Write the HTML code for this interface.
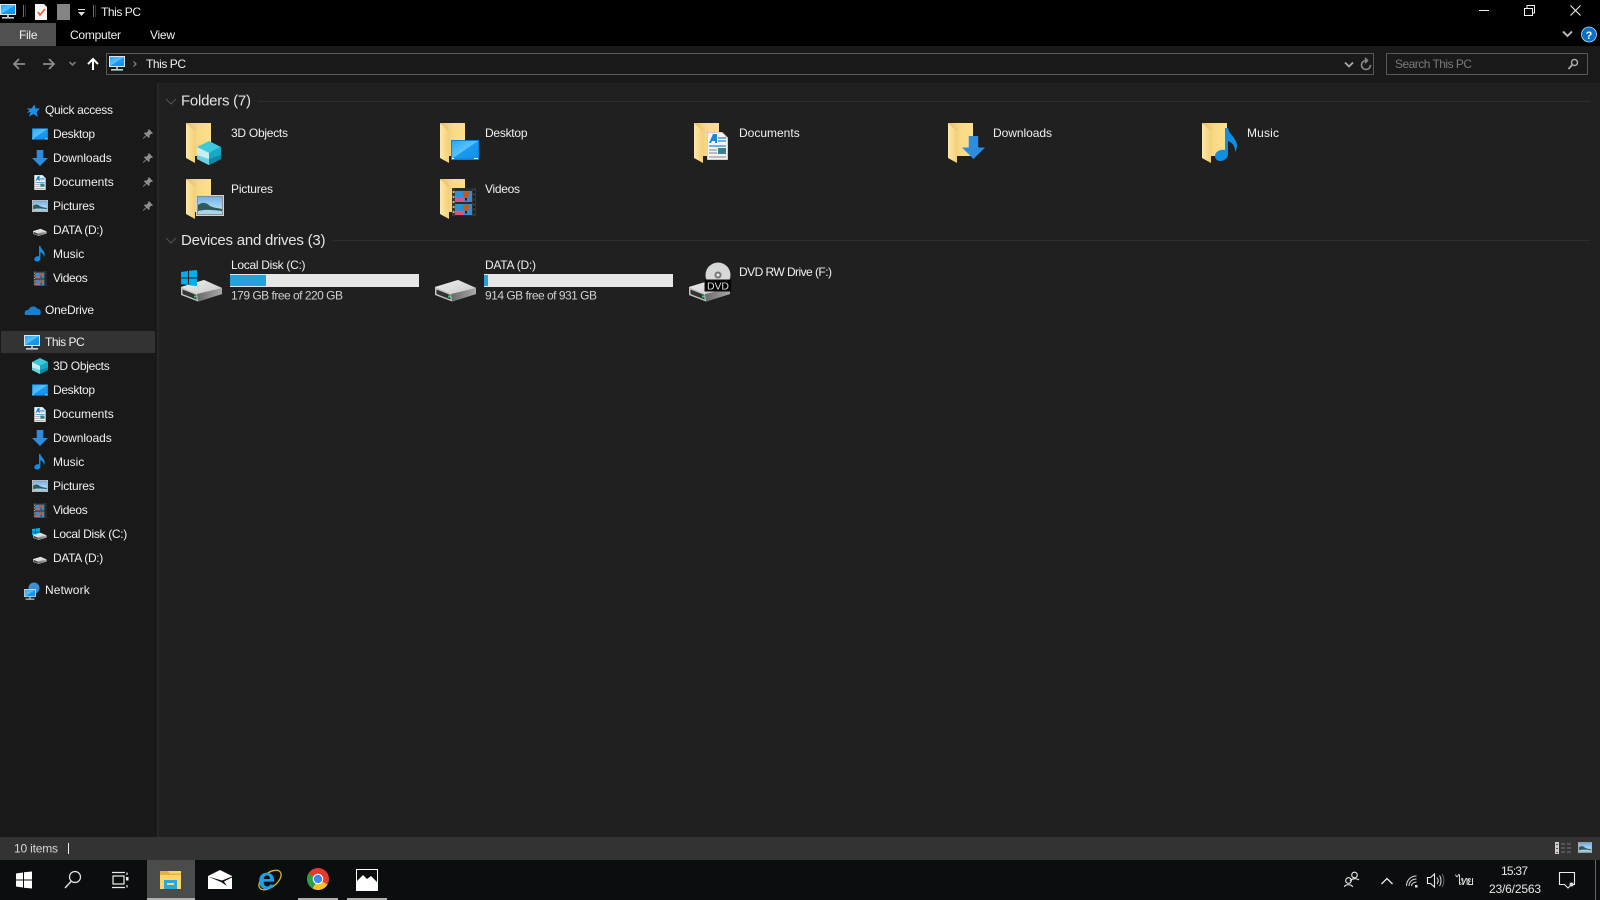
<!DOCTYPE html>
<html><head><meta charset="utf-8"><title>This PC</title>
<style>
html,body{margin:0;padding:0;background:#202020;width:1600px;height:900px;overflow:hidden}
svg{display:block;position:absolute;left:0;top:0}
text{font-family:"Liberation Sans","Noto Sans CJK SC",sans-serif;font-size:12px;fill:#f0f0f0}
.h{font-size:15px;fill:#e4e4e4}
.d{fill:#d0d0d0}
</style></head><body>
<svg width="1600" height="900" viewBox="0 0 1600 900" xmlns="http://www.w3.org/2000/svg">
<defs>
<linearGradient id="fl" x1="0" x2="1" y1="0" y2="0"><stop offset="0" stop-color="#fde9a8"/><stop offset="1" stop-color="#f2cf7a"/></linearGradient>
<linearGradient id="bk" x1="0" x2="1" y1="0" y2="0"><stop offset="0" stop-color="#e9c168"/><stop offset=".5" stop-color="#f9d985"/><stop offset="1" stop-color="#fde08e"/></linearGradient>
<linearGradient id="sky" x1="0" x2="0" y1="0" y2="1"><stop offset="0" stop-color="#6fb4ea"/><stop offset="1" stop-color="#d6ebf8"/></linearGradient>
<linearGradient id="top" x1="0" x2="1" y1="0" y2="1"><stop offset="0" stop-color="#f0f0f0"/><stop offset="1" stop-color="#c8c8c8"/></linearGradient>
<linearGradient id="rt" x1="0" x2="1" y1="0" y2="0"><stop offset="0" stop-color="#6a6a6a"/><stop offset="1" stop-color="#a8a8a8"/></linearGradient>
<linearGradient id="mon" x1="0" x2="1" y1="0" y2="1"><stop offset="0" stop-color="#2aa8f5"/><stop offset=".5" stop-color="#5cc2fa"/><stop offset=".5" stop-color="#1a9cf0"/><stop offset="1" stop-color="#0f8fe8"/></linearGradient>
<symbol id="folder" viewBox="0 0 25 40" overflow="visible"><path d="M0 0H25V33H9V7Z" fill="url(#bk)"/><path d="M0 0L9 7V40L0 35Z" fill="url(#fl)"/></symbol>
<symbol id="cube" viewBox="0 0 24 24"><path d="M12 0L24 6L12 12L0 6Z" fill="#3cc9dc"/><path d="M0 6L12 12V24L0 18Z" fill="#c6eff4"/><path d="M0 14L12 18V24L0 18Z" fill="#6bd3e0"/><path d="M12 12L24 6V18L12 24Z" fill="#15a9c8"/><path d="M12 18L24 14V18L12 24Z" fill="#0d8aa8"/></symbol>
<symbol id="desk" viewBox="0 0 28 20"><rect width="28" height="20" fill="#0a80d8"/><rect x="1" y="1" width="26" height="17.5" fill="url(#mon)"/><rect x="1" y="18" width="2" height="1" fill="#fff"/><rect x="23" y="18" width="4" height="1" fill="#fff"/></symbol>
<symbol id="doc" viewBox="0 0 21 28"><path d="M0 0H15L21 6V28H0Z" fill="#f4f4f4" stroke="#9a9a9a" stroke-width=".8"/><path d="M6 2L2 11H4L5 9H8V11H10V2Z" fill="#1e88d8"/><path d="M11 6H19M11 9H19" stroke="#1e88d8" stroke-width="1.3"/><path d="M2 14H19" stroke="#1e88d8" stroke-width="1.3"/><path d="M2 18H10M2 21H10M2 25H19" stroke="#999" stroke-width="1.3"/><rect x="11" y="16" width="8" height="6" fill="#3a7f8e"/></symbol>
<symbol id="arrow" viewBox="0 0 16 16"><path d="M4.700 0H11.300V8H16L8 16L0 8H4.700Z" fill="#2c8ce0"/></symbol>
<symbol id="note" viewBox="0 0 22 34"><path d="M10 0H13C13.500 6 22 10 22 18C22 20 21 22.500 20 24C20.500 19 18 15 13 13V26C13 30 9 33 5.500 33C2 33 0 31 0 28C0 24 5 21 10 22Z" fill="#0e8fe6"/></symbol>
<symbol id="pic" viewBox="0 0 28 21"><rect width="28" height="21" fill="#d4d4d4"/><rect x="1" y="1" width="26" height="19" fill="#8e8e8e"/><rect x="2" y="2" width="24" height="17" fill="url(#sky)"/><path d="M2 10C6 7 10 7 14 11C18 13 22 13 26 14V19H2Z" fill="#2f5a57"/><path d="M2 16C10 14 18 15 26 16V19H2Z" fill="#a9d3e8"/></symbol>
<symbol id="film" viewBox="0 0 24 28"><rect width="24" height="28" fill="#2b2b2b"/><rect x="0" y="0" width="3" height="28" fill="#3a3a30"/><rect x="20" y="0" width="4" height="28" fill="#353535"/><g fill="#c9b98e"><rect x=".7" y="3" width="1.800" height="2"/><rect x=".7" y="8" width="1.800" height="2"/><rect x=".7" y="13" width="1.800" height="2"/><rect x=".7" y="18" width="1.800" height="2"/><rect x=".7" y="23" width="1.800" height="2"/></g><g fill="#171717"><rect x="21" y="3" width="2" height="2"/><rect x="21" y="8" width="2" height="2"/><rect x="21" y="13" width="2" height="2"/><rect x="21" y="18" width="2" height="2"/><rect x="21" y="23" width="2" height="2"/></g><rect x="3" y="3" width="17" height="11" fill="#2f8fd8"/><rect x="3" y="16" width="17" height="11" fill="#2f8fd8"/><rect x="3" y="10" width="9" height="4" fill="#cf5a7c"/><rect x="3" y="23" width="9" height="4" fill="#cf5a7c"/><circle cx="14" cy="6.500" r="3.300" fill="#c8561e"/><circle cx="14" cy="19.500" r="3.300" fill="#c8561e"/><rect x="13" y="10" width="2" height="2.500" fill="#222"/><rect x="13" y="23" width="2" height="2.500" fill="#222"/></symbol>
<symbol id="drive" viewBox="0 0 42 22"><path d="M0 7L23 0L41 8V14L17 21.500L0 15Z" fill="#c4c4c4"/><path d="M0 7L23 0L41 8L16 14Z" fill="url(#top)"/><path d="M16 14L41 8V14L17 21.500Z" fill="url(#rt)"/><path d="M1.500 9.500L15.500 15V19.500L1.500 14Z" fill="#333"/><rect x="13" y="15.500" width="2.500" height="2" fill="#2ed060"/></symbol>
<symbol id="win" viewBox="0 0 16 16"><path d="M0 2L7 1V7.5H0ZM8 .8L16 0V7.5H8ZM0 8.5H7V15L0 14ZM8 8.5H16V16L8 15.2Z" fill="#00aeef"/></symbol>
<symbol id="pc" viewBox="0 0 16 15"><rect x="0" y="0" width="16" height="11" fill="#d8e6f0"/><rect x="1" y="1" width="14" height="9" fill="url(#mon)"/><rect x="7" y="11" width="2" height="2" fill="#9fb0bb"/><rect x="2" y="13" width="12" height="1.6" fill="#c8d0d6"/></symbol>
<symbol id="pin" viewBox="0 0 10 10"><path d="M5.800 0L10 4.200L9 5L8.200 4.600L6.400 6.400L6.600 8.200L5.600 9L3.600 6.800L.8 9.600L0 9.600V9L3 6.200L1 4.400L1.800 3.400L3.600 3.600L5.400 1.800L5 1Z" fill="#8f8f8f"/></symbol>
</defs>

<!-- title bar and ribbon -->
<rect width="1600" height="46" fill="#000"/>
<rect x="0" y="23" width="56" height="23" fill="#505050"/>
<use href="#pc" x="0" y="4" width="16" height="15"/>
<rect x="23" y="5" width="1" height="12" fill="#707070"/><rect x="25" y="5" width="1" height="12" fill="#333"/>
<path d="M35 4H44L47 7V20H35Z" fill="#f4f4f4"/><path d="M38 12L40 15L45 9" fill="none" stroke="#e8602c" stroke-width="1.600"/>
<path d="M57 4H70V20H57Z" fill="#858585"/>
<rect x="78" y="9" width="7" height="1" fill="#ddd"/><path d="M78 12H85L81.500 16Z" fill="#ddd"/>
<rect x="93" y="5" width="1" height="12" fill="#707070"/><rect x="95" y="5" width="1" height="12" fill="#333"/>
<text x="101" y="16" textLength="40">This PC</text>
<text x="19" y="39" textLength="18.500">File</text>
<text x="70" y="39" textLength="51">Computer</text>
<text x="150" y="39" textLength="25">View</text>
<path d="M1479 10.500H1489" stroke="#f0f0f0" stroke-width="1"/>
<path d="M1524.500 8.500H1532.500V15.500H1524.500ZM1527 8V5.500H1534.500V13H1533" fill="none" stroke="#f0f0f0" stroke-width="1"/>
<path d="M1570.500 5.500L1580.500 15.500M1580.500 5.500L1570.500 15.500" stroke="#f0f0f0" stroke-width="1.100"/>
<path d="M1563 31.500L1567.500 36L1572 31.500" fill="none" stroke="#b4b4b4" stroke-width="2"/>
<circle cx="1589" cy="34.500" r="7.500" fill="#0b6fc9" stroke="#bcd9ef" stroke-width=".8"/>
<text x="1585.600" y="39" style="font-size:11px;font-weight:bold;fill:#fff">?</text>

<!-- nav -->
<rect x="0" y="46" width="1600" height="37" fill="#191919"/>
<rect x="0" y="83" width="157" height="754" fill="#191919"/>
<rect x="157" y="83" width="2" height="754" fill="#272727"/>
<rect x="159" y="83" width="1441" height="754" fill="#202020"/>
<path d="M25 64H14.500M19 59L14 64L19 69" fill="none" stroke="#8c8c8c" stroke-width="1.800"/>
<path d="M43 64H54M49 59L54 64L49 69" fill="none" stroke="#8c8c8c" stroke-width="1.800"/>
<path d="M69.500 62L72.500 65L75.500 62" fill="none" stroke="#7a7a7a" stroke-width="1.600"/>
<path d="M93 70V59M88 64L93 59L98 64" fill="none" stroke="#fff" stroke-width="2"/>
<rect x="106.500" y="53.500" width="1267" height="21" fill="none" stroke="#575757"/>
<use href="#pc" x="109" y="56" width="16" height="15"/>
<path d="M133.500 61.500L136 64L133.500 66.500" fill="none" stroke="#8a8a8a" stroke-width="1.200"/>
<text x="146" y="68" textLength="40">This PC</text>
<path d="M1345 62.500L1349 66.500L1353 62.500" fill="none" stroke="#aaa" stroke-width="1.800"/>
<path d="M1370.500 65A4.500 4.500 0 1 1 1366 60.500M1365 58L1367.500 60.500L1365 63" fill="none" stroke="#8a8a8a" stroke-width="1.600"/>
<rect x="1386.500" y="53.500" width="201" height="21" fill="none" stroke="#575757"/>
<text x="1395" y="68" textLength="77" style="fill:#7a7a7a">Search This PC</text>
<circle cx="1574.500" cy="62.500" r="3" fill="none" stroke="#aaa" stroke-width="1.500"/><path d="M1572 65L1568.500 69" stroke="#aaa" stroke-width="1.800"/>

<!-- sidebar -->
<rect x="1" y="331" width="154" height="22" fill="#333"/>
<path d="M34.500 104.500L35.500 108.500H40L36.500 112L38 117L33.500 114L29 116.500L30.500 112L26.500 113L29.500 110.500L26.500 108.500L31.500 108.500Z" fill="#1e90e8"/>
<text x="45" y="114" textLength="68">Quick access</text>
<use href="#desk" x="32" y="128" width="16" height="12"/>
<text x="53" y="138" textLength="42">Desktop</text><use href="#pin" x="143" y="129" width="10" height="10"/>
<use href="#arrow" x="32" y="150" width="16" height="16"/>
<text x="53" y="162" textLength="58.700">Downloads</text><use href="#pin" x="143" y="153" width="10" height="10"/>
<use href="#doc" x="34" y="175" width="12" height="15"/>
<text x="53" y="186" textLength="60.700">Documents</text><use href="#pin" x="143" y="177" width="10" height="10"/>
<use href="#pic" x="32" y="200" width="16" height="12"/>
<text x="53" y="210" textLength="41.700">Pictures</text><use href="#pin" x="143" y="201" width="10" height="10"/>
<use href="#drive" x="33" y="228" width="14" height="9"/>
<text x="53" y="234" textLength="50.300">DATA (D:)</text>
<use href="#note" x="34" y="246" width="11" height="16"/>
<text x="53" y="258" textLength="31.300">Music</text>
<use href="#film" x="33" y="271" width="14" height="15"/>
<text x="53" y="282" textLength="34.700">Videos</text>

<path d="M25 315C23.500 311 27 309.500 28.500 310C30 305.500 36 305.500 37.500 309C40 308 42 312 40 315Z" fill="#1a7fd0"/>
<text x="45" y="314" textLength="49">OneDrive</text>
<use href="#pc" x="24" y="335" width="16" height="15"/>
<text x="45" y="346" textLength="39.700">This PC</text>

<use href="#cube" x="32" y="358" width="16" height="16"/>
<text x="53" y="370" textLength="56.700">3D Objects</text>
<use href="#desk" x="32" y="384" width="16" height="12"/>
<text x="53" y="394" textLength="42">Desktop</text>
<use href="#doc" x="34" y="407" width="12" height="15"/>
<text x="53" y="418" textLength="60.700">Documents</text>
<use href="#arrow" x="32" y="430" width="16" height="16"/>
<text x="53" y="442" textLength="58.700">Downloads</text>
<use href="#note" x="34" y="454" width="11" height="16"/>
<text x="53" y="466" textLength="31.300">Music</text>
<use href="#pic" x="32" y="480" width="16" height="12"/>
<text x="53" y="490" textLength="41.700">Pictures</text>
<use href="#film" x="33" y="503" width="14" height="15"/>
<text x="53" y="514" textLength="34.700">Videos</text>
<use href="#win" x="32" y="528" width="8" height="8"/><use href="#drive" x="33" y="532" width="14" height="9"/>
<text x="53" y="538" textLength="74.300">Local Disk (C:)</text>
<use href="#drive" x="33" y="556" width="14" height="9"/>
<text x="53" y="562" textLength="50.300">DATA (D:)</text>
<circle cx="34" cy="588" r="5.500" fill="#3f8fd0"/><use href="#pc" x="24" y="589" width="12" height="11"/>
<text x="45" y="594" textLength="44.700">Network</text>

<!-- headers -->
<path d="M166 99L171 104L176 99" fill="none" stroke="#555" stroke-width="1"/>
<text class="h" x="181" y="105.500" textLength="70">Folders (7)</text>
<rect x="258" y="101" width="1332" height="1" fill="#2d2d2d"/>
<path d="M166 238L171 243L176 238" fill="none" stroke="#555" stroke-width="1"/>
<text class="h" x="181" y="245" textLength="144.500">Devices and drives (3)</text>
<rect x="333" y="240" width="1257" height="1" fill="#2d2d2d"/>

<!-- folder tiles -->
<use href="#folder" x="186" y="123" width="25" height="40"/><use href="#cube" x="197" y="141" width="24" height="24"/>
<text x="231" y="137" textLength="57">3D Objects</text>
<use href="#folder" x="440" y="123" width="25" height="40"/><use href="#desk" x="451" y="140" width="28" height="20"/>
<text x="485" y="137" textLength="42.500">Desktop</text>
<use href="#folder" x="694" y="123" width="25" height="40"/><use href="#doc" x="707" y="132" width="21" height="28"/>
<text x="739" y="137" textLength="60.700">Documents</text>
<use href="#folder" x="948" y="123" width="25" height="40"/><use href="#arrow" x="962" y="136" width="23" height="23"/>
<text x="993" y="137" textLength="59">Downloads</text>
<use href="#folder" x="1202" y="123" width="25" height="40"/><use href="#note" x="1215" y="128" width="22" height="34"/>
<text x="1247" y="137" textLength="32">Music</text>
<use href="#folder" x="186" y="179" width="25" height="40"/><use href="#pic" x="196" y="195" width="28" height="21"/>
<text x="231" y="193" textLength="42">Pictures</text>
<use href="#folder" x="440" y="179" width="25" height="40"/><use href="#film" x="452" y="188" width="24" height="28"/>
<text x="485" y="193" textLength="35">Videos</text>

<!-- drives -->
<use href="#drive" x="181" y="280" width="42" height="22"/><use href="#win" x="181" y="270" width="16" height="16"/>
<text x="231" y="269" textLength="74.500">Local Disk (C:)</text>
<rect x="230" y="274" width="189" height="13" fill="#e6e6e6"/><rect x="230" y="275" width="36" height="11" fill="#26a0da"/>
<text class="d" x="231" y="299.500" textLength="112">179 GB free of 220 GB</text>
<use href="#drive" x="435" y="280" width="42" height="22"/>
<text x="485" y="269" textLength="51">DATA (D:)</text>
<rect x="484" y="274" width="189" height="13" fill="#e6e6e6"/><rect x="484" y="275" width="4" height="11" fill="#26a0da"/>
<text class="d" x="485" y="299.500" textLength="112">914 GB free of 931 GB</text>
<use href="#drive" x="689" y="280" width="42" height="22"/>
<circle cx="718" cy="275" r="12.500" fill="#d6d8d8"/><circle cx="718" cy="275" r="3.500" fill="#777"/><circle cx="718" cy="275" r="1.500" fill="#eee"/>
<rect x="705" y="280" width="26" height="11" fill="#000" stroke="#111"/>
<text x="707" y="289.500" textLength="22" style="font-size:10.500px;fill:#ddd">DVD</text>
<text x="739" y="276" textLength="93">DVD RW Drive (F:)</text>

<!-- status bar -->
<rect x="0" y="837" width="1600" height="23" fill="#333"/>
<text x="14" y="852.500" textLength="44" style="fill:#d8d8d8">10 items</text>
<rect x="68" y="843" width="1" height="11" fill="#eee"/>
<rect x="1555" y="842" width="4" height="12" fill="#ccc"/><rect x="1556" y="844" width="2" height="1" fill="#555"/><rect x="1556" y="848" width="2" height="1" fill="#555"/><rect x="1556" y="852" width="2" height="1" fill="#c33"/>
<path d="M1561 844H1565M1567 844H1571M1561 848H1565M1567 848H1571M1561 852H1565M1567 852H1571" stroke="#777"/>
<use href="#pic" x="1578" y="842" width="14" height="11"/>

<!-- taskbar -->
<rect x="0" y="860" width="1600" height="40" fill="#0b0e0e"/>
<rect x="147" y="860" width="48" height="40" fill="#4a4c4c"/>
<rect x="147" y="898" width="48" height="2" fill="#b0b0b0"/>
<rect x="298" y="898" width="40" height="2" fill="#b0b0b0"/>
<rect x="347" y="898" width="40" height="2" fill="#b0b0b0"/>
<path d="M16 873.500L23 872.500V879.500H16ZM24 872.300L32 871.500V879.500H24ZM16 880.500H23V887.500L16 886.500ZM24 880.500H32V888.500L24 887.700Z" fill="#fff"/>
<circle cx="75" cy="877" r="5.500" fill="none" stroke="#e8e8e8" stroke-width="1.200"/><path d="M71 881.500L65 888" stroke="#e8e8e8" stroke-width="1.400"/>
<path d="M113 876H124V884H113ZM112 872.500H125M112 887.500H125M127 872.500V875M127 885V887.500" fill="none" stroke="#e8e8e8" stroke-width="1.200"/><rect x="126" y="877" width="2.500" height="3.500" fill="#e8e8e8"/>
<path d="M160 871H181V889H160Z" fill="#fcd66a"/><path d="M160 871H168L170 873.500H181V875H160Z" fill="#e6b13c"/><path d="M164 885V880H177V885H174V883H167V885Z" fill="#29a8de"/><rect x="164" y="885" width="13" height="4" fill="#29a8de"/>
<path d="M208 876L220 870L232 876V889H208Z" fill="#fff"/><path d="M208 876.500L222 880.500L232 876.500V877.500L224 881.500L227 886L221 882Z" fill="#0b0e0e"/>
<ellipse cx="270" cy="880" rx="13" ry="7" transform="rotate(-38 270 880)" fill="none" stroke="#e2b32c" stroke-width="1.300"/>
<text x="258" y="889" style="font-size:31px;font-weight:bold;fill:#1aa3e8">e</text>
<circle cx="318" cy="879" r="11" fill="#e33b2e"/><path d="M318 879L327.500 884.500A11 11 0 0 1 312.500 888.500Z" fill="#fbc02d"/><path d="M318 879L312.500 888.500A11 11 0 0 1 308.500 873.500Z" fill="#2f9e44"/><circle cx="318" cy="879" r="5.300" fill="#fff"/><circle cx="318" cy="879" r="4.200" fill="#4285f4"/>
<rect x="356.500" y="869.500" width="21" height="21" fill="#0b0e0e" stroke="#fff"/><path d="M357 890V881L363 875L367 879L371 876L378 883V890Z" fill="#fff"/>

<!-- tray -->
<circle cx="1354.500" cy="875" r="2.800" fill="none" stroke="#eee" stroke-width="1.100"/><path d="M1350 881C1351 878.500 1357 878 1359 880" fill="none" stroke="#eee" stroke-width="1.100"/>
<circle cx="1348.500" cy="880.500" r="2.800" fill="none" stroke="#eee" stroke-width="1.100"/><path d="M1344.500 887C1345 884 1352 884 1352.500 887" fill="none" stroke="#eee" stroke-width="1.100"/>
<path d="M1381.500 884L1387 878.500L1392.500 884" fill="none" stroke="#eee" stroke-width="1.300"/>
<path d="M1406.500 886C1406.500 880 1411 876 1416.500 876M1409 886C1409 882 1412 879 1416.500 879M1411.500 886C1411.500 884 1413.500 882 1416.500 882" fill="none" stroke="#ddd" stroke-width="1"/><rect x="1415" y="885" width="2.500" height="2.500" fill="#ddd"/>
<path d="M1427.500 877.500H1430.500L1434.500 874V887L1430.500 883.500H1427.500Z" fill="none" stroke="#eee" stroke-width="1.100"/><path d="M1437 877.500C1438.500 879.500 1438.500 882 1437 884M1439.500 875.500C1441.500 878.500 1441.500 883 1439.500 886" fill="none" stroke="#ddd" stroke-width="1"/><path d="M1442 874C1444.500 878 1444.500 883 1442 887" fill="none" stroke="#666" stroke-width="1"/>
<text x="1456" y="885" textLength="18" style="font-family:'Liberation Sans','Noto Sans CJK SC','DejaVu Sans',sans-serif;fill:#e8e8e8">ไทย</text>
<text x="1501" y="875" textLength="27" style="fill:#e8e8e8">15:37</text>
<text x="1489" y="893" textLength="52" style="fill:#e8e8e8">23/6/2563</text>
<path d="M1559.500 872.500H1574.500V884.500H1571.500L1568 888L1564.500 884.500H1559.500Z" fill="none" stroke="#eee" stroke-width="1.100"/><circle cx="1571.500" cy="884.500" r="2" fill="#ddd"/>
<rect x="1595" y="860" width="1" height="40" fill="#666"/>
</svg>
</body></html>
